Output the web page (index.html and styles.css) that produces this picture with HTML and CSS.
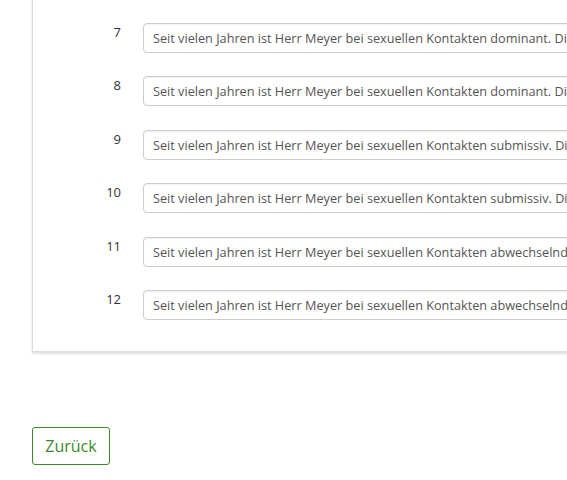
FILE: index.html
```html
<!DOCTYPE html>
<html lang="de">
<head>
<meta charset="UTF-8">
<meta name="viewport" content="width=device-width, initial-scale=1.0">
<title>Fragebogen</title>
<link rel="stylesheet" href="styles.css">
</head>
<body>
  <div class="page">
    <div class="panel">
      <div class="item-row">
        <span class="item-nr">7</span>
        <input class="item-text" type="text" value="Seit vielen Jahren ist Herr Meyer bei sexuellen Kontakten dominant. Die Partnerinnen empfinden dies als angenehm." readonly>
      </div>
      <div class="item-row">
        <span class="item-nr">8</span>
        <input class="item-text" type="text" value="Seit vielen Jahren ist Herr Meyer bei sexuellen Kontakten dominant. Die Partnerinnen empfinden dies als belastend." readonly>
      </div>
      <div class="item-row">
        <span class="item-nr">9</span>
        <input class="item-text" type="text" value="Seit vielen Jahren ist Herr Meyer bei sexuellen Kontakten submissiv. Die Partnerinnen empfinden dies als angenehm." readonly>
      </div>
      <div class="item-row">
        <span class="item-nr">10</span>
        <input class="item-text" type="text" value="Seit vielen Jahren ist Herr Meyer bei sexuellen Kontakten submissiv. Die Partnerinnen empfinden dies als belastend." readonly>
      </div>
      <div class="item-row">
        <span class="item-nr">11</span>
        <input class="item-text" type="text" value="Seit vielen Jahren ist Herr Meyer bei sexuellen Kontakten abwechselnd dominant und submissiv." readonly>
      </div>
      <div class="item-row">
        <span class="item-nr">12</span>
        <input class="item-text" type="text" value="Seit vielen Jahren ist Herr Meyer bei sexuellen Kontakten abwechselnd dominant und submissiv, je nach Partnerin." readonly>
      </div>
    </div>

    <div class="actions">
      <button type="button" class="btn-back">Zurück</button>
    </div>
  </div>
</body>
</html>
```

FILE: styles.css
```css
body {
  margin: 0;
  background-color: #ffffff;
  color: #333333;
  font-family: "Open Sans", Arial, sans-serif;
  overflow: hidden;
}

.page {
  padding-left: 32px;
}

.panel {
  width: 700px;
  margin-top: -20px;
  padding: 42px 0 31px 0;
  background-color: #ffffff;
  border: 1px solid #dddddd;
  box-shadow: 0px 2px 2px rgba(0, 0, 0, 0.12);
}

.item-row {
  display: flex;
  align-items: flex-start;
  margin-bottom: 23.4px;
}

.item-row:last-child {
  margin-bottom: 0;
}

.item-nr {
  width: 88px;
  text-align: right;
  font-size: 13px;
  line-height: 18px;
  color: #333333;
}

.item-text {
  margin-left: 22px;
  width: 560px;
  height: 30px;
  box-sizing: border-box;
  padding: 0 9px;
  border: 1px solid #cccccc;
  border-radius: 4px;
  box-shadow: inset 0 1px 1px rgba(0, 0, 0, 0.06);
  font-family: "Open Sans", Arial, sans-serif;
  font-size: 12.7px;
  color: #555555;
  background-color: #ffffff;
}

.actions {
  margin-top: 75px;
}

.btn-back {
  background-color: #ffffff;
  color: #3a8a2c;
  border: 1px solid #3a8a2c;
  border-radius: 3px;
  padding: 0 12px;
  height: 38px;
  width: 78px;
  font-family: "Open Sans", Arial, sans-serif;
  font-size: 16px;
  cursor: pointer;
}
```
